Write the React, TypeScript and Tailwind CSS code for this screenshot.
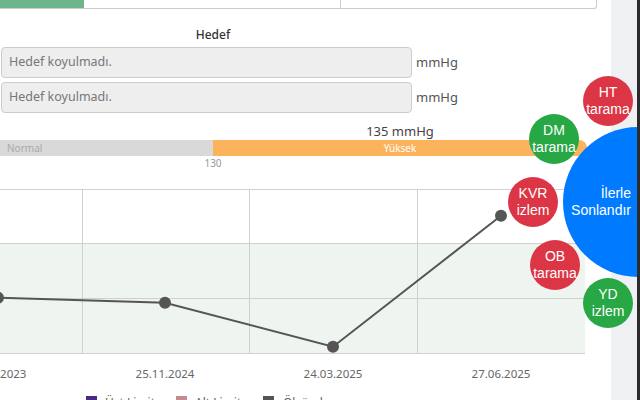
import React from 'react';

const font = { fontFamily: '"Noto Sans", "Open Sans", sans-serif' };

type Bubble = { label: string[]; color: string; pos: string };

const bubbles: Bubble[] = [
  { label: ['HT', 'tarama'], color: 'bg-[#dc3545]', pos: 'left-[583px] top-[76px]' },
  { label: ['DM', 'tarama'], color: 'bg-[#28a745]', pos: 'left-[529px] top-[114px]' },
  { label: ['KVR', 'izlem'], color: 'bg-[#dc3545]', pos: 'left-[508px] top-[177px]' },
  { label: ['OB', 'tarama'], color: 'bg-[#dc3545]', pos: 'left-[530px] top-[240px]' },
  { label: ['YD', 'izlem'], color: 'bg-[#28a745]', pos: 'left-[583px] top-[278px]' },
];

function TargetInput() {
  return (
    <div className="flex items-center h-[31px]">
      <div className="ml-[1px] w-[411px] h-[31px] flex items-center px-[7px] bg-[#eeeeee] border border-[#cccccc] rounded-[4px] text-[12.5px] text-[#777777]">
        Hedef koyulmadı.
      </div>
      <span className="ml-[4px] text-[13px] text-[#555555]">mmHg</span>
    </div>
  );
}

function Chart() {
  const pts = [
    [-2, 108.7],
    [165, 113.7],
    [333, 157.7],
    [501, 26.7],
  ];
  const labels = [
    [-3, '19.09.2023'],
    [165, '25.11.2024'],
    [333, '24.03.2025'],
    [501, '27.06.2025'],
  ] as const;
  return (
    <svg width="611" height="196" className="block">
      <rect x="0" y="54" width="585" height="110" fill="#eef4ef" />
      {[0, 54, 109, 164].map((y) => (
        <line key={y} x1="0" x2="585" y1={y + 0.5} y2={y + 0.5} stroke="#d0d0d0" strokeWidth="1" />
      ))}
      {[82, 249, 417].map((x) => (
        <line key={x} x1={x + 0.5} x2={x + 0.5} y1="0" y2="164" stroke="#d0d0d0" strokeWidth="1" />
      ))}
      <polyline
        points={pts.map((p) => p.join(',')).join(' ')}
        fill="none"
        stroke="#555555"
        strokeWidth="2"
      />
      {pts.map(([x, y]) => (
        <circle key={x} cx={x} cy={y} r="6" fill="#555555" />
      ))}
      {labels.map(([x, t]) => (
        <text key={t} x={x} y="189" textAnchor="middle" fontSize="11.5" fill="#666666" style={font}>
          {t}
        </text>
      ))}
    </svg>
  );
}

export default function App() {
  return (
    <div className="relative w-[640px] h-[400px] overflow-hidden bg-white flex" style={font}>
      {/* main panel */}
      <div className="w-[611px] shrink-0">
        {/* tabs */}
        <div className="h-[9px] mr-[14px] flex border-b border-r border-[#cccccc] rounded-br-[3px]">
          <div className="w-[84px] bg-[#6db58a]" />
          <div className="w-[257px] border-r border-[#cccccc]" />
          <div className="flex-1" />
        </div>

        <div className="mt-[18px] w-[426px] text-center text-[12px] leading-[16px] font-medium text-[#333333]">
          Hedef
        </div>

        <div className="mt-[4px] flex flex-col gap-[4px]">
          <TargetInput />
          <TargetInput />
        </div>

        {/* range bar */}
        <div className="mt-[10px] ml-[213px] w-[374px] text-center text-[13px] leading-[16px] text-[#444444]">
          135 mmHg
        </div>
        <div className="mt-[1px] w-[587px] h-[16px] flex text-[10px] leading-[16px]">
          <div className="w-[213px] bg-[#d9d9d9] pl-[7px] text-[#aaaaaa]">Normal</div>
          <div className="flex-1 bg-[#fcb45c] rounded-r-full text-center text-white">Yüksek</div>
        </div>
        <div className="mt-[1px] ml-[201px] w-[24px] text-center text-[10px] leading-[12px] text-[#999999]">
          130
        </div>

        <div className="mt-[20px]">
          <Chart />
        </div>

        {/* legend */}
        <div className="mt-[11px] ml-[86px] flex items-start text-[12px] leading-[14px] text-[#666666]">
          <div className="w-[90px] flex">
            <span className="w-[11px] h-[11px] bg-[#4b2a86]" />
            <span className="ml-[8px]">Üst Limit</span>
          </div>
          <div className="w-[87px] flex">
            <span className="w-[11px] h-[11px] bg-[#c48b90]" />
            <span className="ml-[8px]">Alt Limit</span>
          </div>
          <div className="flex">
            <span className="w-[11px] h-[11px] bg-[#555555]" />
            <span className="ml-[9px]">Ölçümler</span>
          </div>
        </div>
      </div>

      {/* side strip */}
      <div className="w-[26px] shrink-0 bg-[#eef0f4]" />
      <div className="relative z-20 w-[3px] shrink-0 bg-[#2b2b2b]" />

      {/* floating action buttons */}
      <div
        className="absolute z-10 left-[563px] top-[127px] w-[150px] h-[150px] rounded-full bg-[#007bff] flex items-center justify-end pr-[82px] text-right text-white text-[14px] leading-[17px]"
        style={{ fontFamily: '"Liberation Sans", Arial, sans-serif' }}
      >
        <div>
          İlerle
          <br />
          Sonlandır
        </div>
      </div>
      {bubbles.map((b) => (
        <div
          key={b.label[0]}
          className={`absolute z-10 w-[50px] h-[50px] rounded-full flex flex-col items-center justify-center text-white text-[14px] leading-[17px] ${b.color} ${b.pos}`}
          style={{ fontFamily: '"Liberation Sans", Arial, sans-serif' }}
        >
          <span>{b.label[0]}</span>
          <span>{b.label[1]}</span>
        </div>
      ))}
    </div>
  );
}
